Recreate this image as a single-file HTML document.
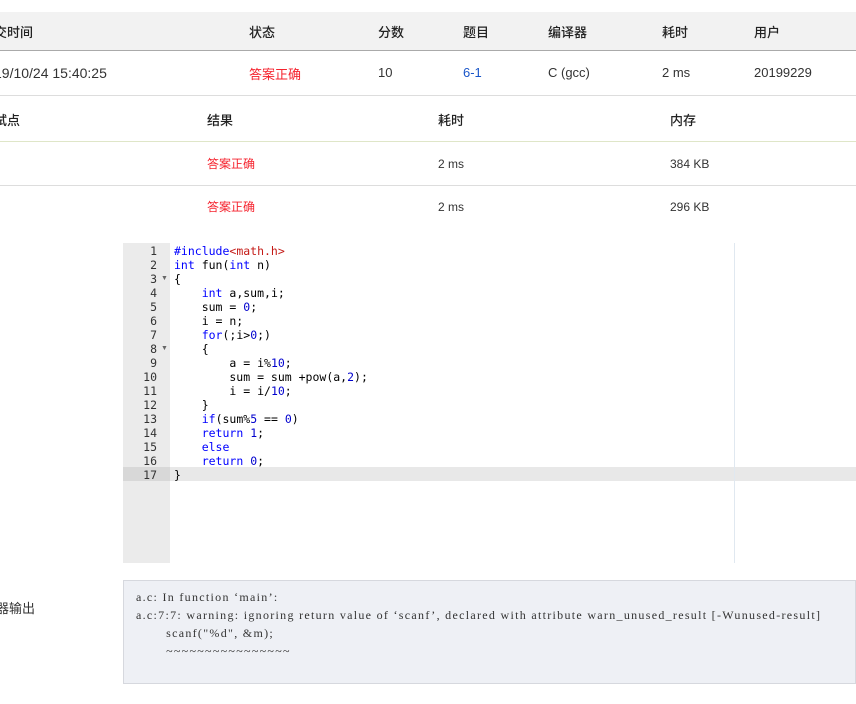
<!DOCTYPE html>
<html><head><meta charset="utf-8"><style>
body{margin:0;width:856px;height:704px;background:#fff;font-family:"Liberation Sans","Noto Sans CJK SC",sans-serif;font-size:13px;color:#333;position:relative;overflow:hidden}
.a{position:absolute;white-space:nowrap}
.b{font-weight:500;color:#222;font-family:"Noto Sans CJK SC",sans-serif}
.red{color:#f5222d}
.code{position:absolute;left:123px;top:243px;width:733px;height:320px;background:#fff}
.gut{position:absolute;left:0;top:0;width:47px;height:320px;background:#ebebeb}
.ln{position:absolute;left:0;width:34px;text-align:right;font-family:"DejaVu Sans Mono",monospace;font-size:11.5px;color:#333}
.cl{position:absolute;left:51px;font-family:"DejaVu Sans Mono",monospace;font-size:11.5px;color:#000;white-space:pre}
.k{color:#0000ff}.n{color:#0000cd}.s{color:#c41a16}
</style></head><body>
<div class="a" style="left:0;top:12px;width:856px;height:38px;background:#f2f2f2;border-bottom:1px solid #aaa"></div>
<div class="a b" style="left:-6px;top:22px">交时间</div>
<div class="a b" style="left:249px;top:22px">状态</div>
<div class="a b" style="left:378px;top:22px">分数</div>
<div class="a b" style="left:463px;top:22px">题目</div>
<div class="a b" style="left:548px;top:22px">编译器</div>
<div class="a b" style="left:662px;top:22px">耗时</div>
<div class="a b" style="left:754px;top:22px">用户</div>
<div class="a" style="left:-6px;top:65px;font-size:14px">19/10/24 15:40:25</div>
<div class="a red" style="left:249px;top:64px">答案正确</div>
<div class="a" style="left:378px;top:65px">10</div>
<div class="a" style="left:463px;top:65px;color:#1a56c8">6-1</div>
<div class="a" style="left:548px;top:65px">C (gcc)</div>
<div class="a" style="left:662px;top:65px">2 ms</div>
<div class="a" style="left:754px;top:65px">20199229</div>
<div class="a" style="left:0;top:95px;width:856px;border-top:1px solid #ddd"></div>
<div class="a b" style="left:-6px;top:110px">试点</div>
<div class="a b" style="left:207px;top:110px">结果</div>
<div class="a b" style="left:438px;top:110px">耗时</div>
<div class="a b" style="left:670px;top:110px">内存</div>
<div class="a" style="left:0;top:141px;width:856px;border-top:1px solid #dfe6c8"></div>
<div class="a red" style="left:207px;top:155px;font-size:12px">答案正确</div>
<div class="a" style="left:438px;top:157px;font-size:12px">2 ms</div>
<div class="a" style="left:670px;top:157px;font-size:12px">384 KB</div>
<div class="a" style="left:0;top:185px;width:856px;border-top:1px solid #ddd"></div>
<div class="a red" style="left:207px;top:198px;font-size:12px">答案正确</div>
<div class="a" style="left:438px;top:200px;font-size:12px">2 ms</div>
<div class="a" style="left:670px;top:200px;font-size:12px">296 KB</div>
<div class="code">
<div class="gut"></div>
<div style="position:absolute;left:0;top:224px;width:733px;height:14px;background:#e8e8e8"></div>
<div style="position:absolute;left:0;top:224px;width:47px;height:14px;background:#d8d8d8"></div>
<div style="position:absolute;left:611px;top:0;height:320px;border-left:1px solid #e0e8f0"></div>
<div class="ln" style="top:1px">1</div><div class="ln" style="top:15px">2</div><div class="ln" style="top:29px">3</div><div class="ln" style="top:43px">4</div><div class="ln" style="top:57px">5</div><div class="ln" style="top:71px">6</div><div class="ln" style="top:85px">7</div><div class="ln" style="top:99px">8</div><div class="ln" style="top:113px">9</div><div class="ln" style="top:127px">10</div><div class="ln" style="top:141px">11</div><div class="ln" style="top:155px">12</div><div class="ln" style="top:169px">13</div><div class="ln" style="top:183px">14</div><div class="ln" style="top:197px">15</div><div class="ln" style="top:211px">16</div><div class="ln" style="top:225px">17</div>
<div class="a" style="left:38px;top:32px;font-size:7px;color:#666">▼</div>
<div class="a" style="left:38px;top:102px;font-size:7px;color:#666">▼</div>
<div class="cl" style="top:1px"><span class="k">#include</span><span class="s">&lt;math.h&gt;</span></div>
<div class="cl" style="top:15px"><span class="k">int</span> fun(<span class="k">int</span> n)</div>
<div class="cl" style="top:29px">{</div>
<div class="cl" style="top:43px">    <span class="k">int</span> a,sum,i;</div>
<div class="cl" style="top:57px">    sum = <span class="n">0</span>;</div>
<div class="cl" style="top:71px">    i = n;</div>
<div class="cl" style="top:85px">    <span class="k">for</span>(;i&gt;<span class="n">0</span>;)</div>
<div class="cl" style="top:99px">    {</div>
<div class="cl" style="top:113px">        a = i%<span class="n">10</span>;</div>
<div class="cl" style="top:127px">        sum = sum +pow(a,<span class="n">2</span>);</div>
<div class="cl" style="top:141px">        i = i/<span class="n">10</span>;</div>
<div class="cl" style="top:155px">    }</div>
<div class="cl" style="top:169px">    <span class="k">if</span>(sum%<span class="n">5</span> == <span class="n">0</span>)</div>
<div class="cl" style="top:183px">    <span class="k">return</span> <span class="n">1</span>;</div>
<div class="cl" style="top:197px">    <span class="k">else</span></div>
<div class="cl" style="top:211px">    <span class="k">return</span> <span class="n">0</span>;</div>
<div class="cl" style="top:225px">}</div>
</div>
<div class="a" style="left:-4px;top:598px;font-size:13px">器输出</div>
<div class="a" style="left:123px;top:580px;width:731px;height:102px;background:#eef0f5;border:1px solid #d6d8de"></div>
<div class="a" style="left:136px;top:588px;font-family:'Liberation Serif','Noto Serif CJK SC',serif;font-size:12px;letter-spacing:1.3px;color:#333;line-height:18px;white-space:pre">a.c: In function ‘main’:
a.c:7:7: warning: ignoring return value of ‘scanf’, declared with attribute warn_unused_result [-Wunused-result]
       scanf("%d", &amp;m);
       ~~~~~~~~~~~~~~~~</div>
</body></html>
